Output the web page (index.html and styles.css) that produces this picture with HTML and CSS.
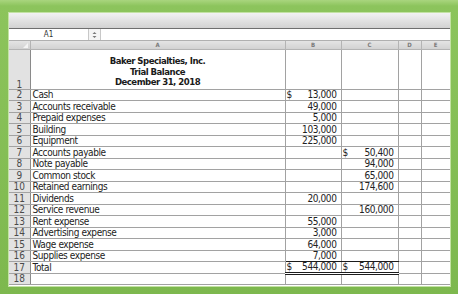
FILE: index.html
```html
<!DOCTYPE html>
<html>
<head>
<meta charset="utf-8">
<link rel="stylesheet" href="styles.css">
</head>
<body>
<div class="window">
  <div class="toolbar"></div>
  <div class="namebar">
    <div class="namebox">A1</div>
    <div class="stepper"><svg width="5" height="8" viewBox="0 0 5 8"><path d="M0.5 3 L2.5 1 L4.5 3 Z M0.5 5 L2.5 7 L4.5 5 Z" fill="#777"/></svg></div>
    <div class="formula"></div>
  </div>
  <table class="sheet">
    <colgroup>
      <col class="c-rn"><col class="c-a"><col class="c-b"><col class="c-c"><col class="c-d"><col class="c-e">
    </colgroup>
    <tr class="hdr">
      <th class="corner"><span class="tri"></span></th><th>A</th><th>B</th><th>C</th><th>D</th><th>E</th>
    </tr>
    <tr class="title-row">
      <td class="rn">1</td>
      <td class="title"><div>Baker Specialties, Inc.</div><div>Trial Balance</div><div>December 31, 2018</div></td>
      <td></td><td></td><td></td><td></td>
    </tr>
    <tr><td class="rn">2</td><td class="lbl">Cash</td><td class="num"><span class="amt"><span>$</span><span>13,000</span></span></td><td></td><td></td><td></td></tr>
    <tr><td class="rn">3</td><td class="lbl">Accounts receivable</td><td class="num">49,000</td><td></td><td></td><td></td></tr>
    <tr><td class="rn">4</td><td class="lbl">Prepaid expenses</td><td class="num">5,000</td><td></td><td></td><td></td></tr>
    <tr><td class="rn">5</td><td class="lbl">Building</td><td class="num">103,000</td><td></td><td></td><td></td></tr>
    <tr><td class="rn">6</td><td class="lbl">Equipment</td><td class="num">225,000</td><td></td><td></td><td></td></tr>
    <tr><td class="rn">7</td><td class="lbl">Accounts payable</td><td></td><td class="num"><span class="amt"><span>$</span><span>50,400</span></span></td><td></td><td></td></tr>
    <tr><td class="rn">8</td><td class="lbl">Note payable</td><td></td><td class="num">94,000</td><td></td><td></td></tr>
    <tr><td class="rn">9</td><td class="lbl">Common stock</td><td></td><td class="num">65,000</td><td></td><td></td></tr>
    <tr><td class="rn">10</td><td class="lbl">Retained earnings</td><td></td><td class="num">174,600</td><td></td><td></td></tr>
    <tr><td class="rn">11</td><td class="lbl">Dividends</td><td class="num">20,000</td><td></td><td></td><td></td></tr>
    <tr><td class="rn">12</td><td class="lbl">Service revenue</td><td></td><td class="num">160,000</td><td></td><td></td></tr>
    <tr><td class="rn">13</td><td class="lbl">Rent expense</td><td class="num">55,000</td><td></td><td></td><td></td></tr>
    <tr><td class="rn">14</td><td class="lbl">Advertising expense</td><td class="num">3,000</td><td></td><td></td><td></td></tr>
    <tr><td class="rn">15</td><td class="lbl">Wage expense</td><td class="num">64,000</td><td></td><td></td><td></td></tr>
    <tr><td class="rn">16</td><td class="lbl">Supplies expense</td><td class="num under">7,000</td><td class="num under"></td><td></td><td></td></tr>
    <tr><td class="rn">17</td><td class="lbl">Total</td><td class="num dbl"><span class="amt"><span>$</span><span>544,000</span></span></td><td class="num dbl"><span class="amt"><span>$</span><span>544,000</span></span></td><td></td><td></td></tr>
    <tr><td class="rn">18</td><td class="lbl"></td><td></td><td></td><td></td><td></td></tr>
  </table>
</div>
</body>
</html>
```
FILE: styles.css
```css
html, body {
  margin: 0;
  padding: 0;
}
body {
  width: 458px;
  height: 294px;
  overflow: hidden;
  background: linear-gradient(to bottom, #a9d57e 0px, #8cc45c 6px, #7db84e 100%);
  font-family: "DejaVu Sans Condensed", "Liberation Sans Narrow", sans-serif;
  color: #222;
  padding-top: 13px;
  box-sizing: border-box;
}
.window {
  margin: 0 8px 0 9px;
  height: 273px;
  background: #fff;
  box-shadow: 0 0 0 1px #c3e2a3;
  overflow: hidden;
}
.toolbar {
  height: 15px;
  background: linear-gradient(to bottom, #f2f2f2, #d2d2d2);
  border-bottom: 1px solid #6f6f6f;
}
.namebar {
  display: flex;
  height: 11px;
  border-bottom: 1px solid #b0b0b0;
  background: #fff;
}
.namebox {
  width: 79px;
  text-align: center;
  font-size: 8px;
  line-height: 11px;
  color: #333;
}
.stepper {
  width: 11px;
  border-left: 1px solid #c8c8c8;
  border-right: 1px solid #c8c8c8;
  display: flex;
  align-items: center;
  justify-content: center;
  background: #f4f4f4;
}
.formula {
  flex: 1;
}
.sheet {
  border-collapse: collapse;
  table-layout: fixed;
  width: 441px;
}
.c-rn { width: 21px; }
.c-a { width: 255px; }
.c-b { width: 56px; }
.c-c { width: 57px; }
.c-d { width: 23px; }
.c-e { width: 29px; }
.sheet td, .sheet th {
  padding: 0;
  border: 1px solid #a2a2a2;
  overflow: hidden;
  white-space: nowrap;
}
.sheet tr.hdr { height: 8px; }
.hdr th {
  font-size: 6px;
  line-height: 6px;
  font-weight: bold;
  color: #7a7a7a;
  background: linear-gradient(to bottom, #e4e4e4, #d2d2d2);
  border-color: #b4b4b4;
  border-top: none;
}
.hdr th:first-child { border-left: none; }
.corner {
  position: relative;
}
.tri {
  position: absolute;
  right: 2px;
  bottom: 1px;
  width: 0;
  height: 0;
  border-left: 5px solid transparent;
  border-bottom: 5px solid #f4f4f4;
}
.sheet tr { height: 11.5px; }
.sheet td {
  font-size: 10px;
  line-height: 9px;
  letter-spacing: -0.4px;
}
.rn {
  background: #e2e2e2;
  color: #4a4a4a;
  text-align: center;
  letter-spacing: 0 !important;
  border-left: none !important;
  border-right-color: #8a8a8a !important;
}
.sheet tr.title-row { height: 40px; }
.title-row td {
  vertical-align: bottom;
}
.title {
  text-align: center;
  font-weight: bold;
  font-size: 9.5px !important;
  letter-spacing: -0.5px !important;
  line-height: 10.5px !important;
  padding-bottom: 1px !important;
  color: #1a1a1a;
}
.lbl {
  padding-left: 2px !important;
}
.num {
  text-align: right;
  padding-right: 4px !important;
}
.amt {
  display: flex;
  justify-content: space-between;
  padding-left: 1px;
}
.under {
  border-bottom: 1px solid #1c1c1c !important;
}
.dbl {
  border-bottom: 3px double #1c1c1c !important;
}
```
